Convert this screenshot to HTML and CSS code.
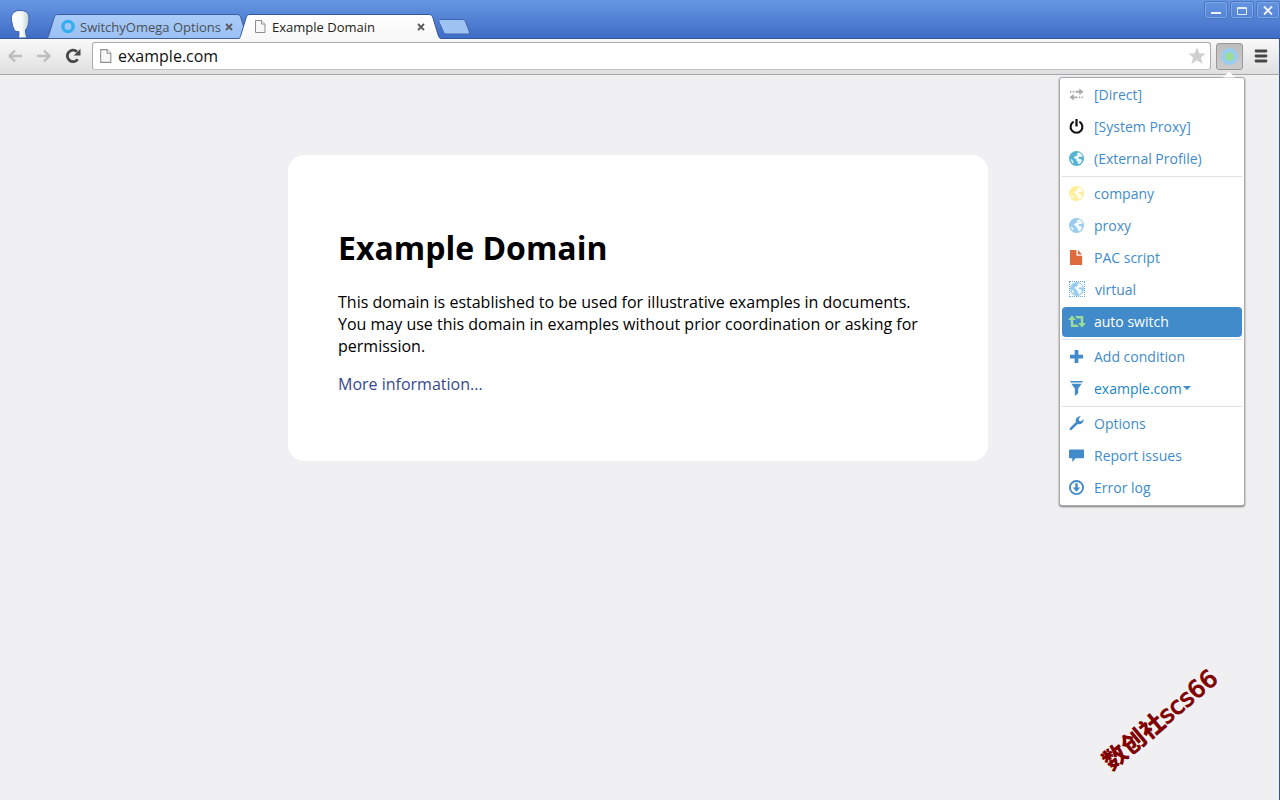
FILE: index.html
```html
<!DOCTYPE html>
<html lang="en">
<head>
    <meta charset="UTF-8">
    <meta name="viewport" content="width=device-width, initial-scale=1.0">
    <title>Example Domain</title>
    <link rel="stylesheet" href="styles.css">
</head>
<body>

<!-- Shared shapes -->
<svg class="defs" width="0" height="0" aria-hidden="true">
    <defs>
        <linearGradient id="activeFill" x1="0" y1="0" x2="0" y2="1">
            <stop offset="0" stop-color="#ffffff"/>
            <stop offset="1" stop-color="#f8f8f8"/>
        </linearGradient>
        <linearGradient id="idleFill" x1="0" y1="0" x2="0" y2="1">
            <stop offset="0" stop-color="#a9cbf8"/>
            <stop offset="1" stop-color="#9bc1f3"/>
        </linearGradient>
        <linearGradient id="headFill" x1="0" y1="0" x2="1" y2="0">
            <stop offset="0" stop-color="#ffffff"/>
            <stop offset="0.6" stop-color="#f4f9f9"/>
            <stop offset="1" stop-color="#bccfd3"/>
        </linearGradient>
    </defs>
    <symbol id="page" viewBox="0 0 12 15">
        <path d="M1.500 1.500h6l3.500 3.500v8.500h-9.500z" fill="#f7f7f7" stroke="#8e8e8e"/>
        <path d="M7.500 1.500v3.500h3.500" fill="#fff" stroke="#8e8e8e"/>
    </symbol>
    <symbol id="cross" viewBox="0 0 8 8">
        <path d="M1 1l6 6M7 1l-6 6" stroke="#5a5a5a" stroke-width="1.800" fill="none"/>
    </symbol>
    <symbol id="globe" viewBox="0 0 16 16">
        <circle cx="8" cy="8" r="8" fill="currentColor"/>
        <path d="M8.500 2l2.500-.5 2.500 2 1 2.500-2 .5-1.200-.4-1.300.9.600 1.200 2 .3 1.200 1.500-1 2.500-2 1.500-1.300-.7-.2-1.900-1.500-1.200-.1-1.600-1.500-.5L5 6.800l1.500-1.300 1.700-.5.8-1.200z" fill="#fff" opacity=".9"/>
        <path d="M1.500 8.500l2.200 1 1 2 .1 2-1.800-1.500z" fill="#fff" opacity=".8"/>
    </symbol>
</svg>

<!-- Title Bar -->
<header class="titlebar">
    <svg class="profile" viewBox="0 0 24 29">
        <path d="M12 1.500c5 0 9 1.500 9 7.500 0 5-.8 9-3.500 12 0 3 .5 5 1.500 8H10.500c.5-2.500.8-4.500.2-6.500-3 .3-4.700-.5-5-3.500L4.500 17c0-3-1.400-5-1.200-8C3.500 4 7 1.500 12 1.500z" fill="url(#headFill)" stroke="#3c61ae" stroke-width="1"/>
    </svg>
    <div class="tabs">
        <div class="tab">
            <svg class="tab-shape" viewBox="0 0 204 25" preserveAspectRatio="none">
                <path d="M0 24.500c1.500 0 2-1 3-4L8 4c1-2.500 2-3.500 4-3.500h179c2 0 3 1 4 3.500l5 16.500c1 3 2 4 4 4z" fill="url(#idleFill)" stroke="#3d5f9f"/>
            </svg>
            <svg class="favicon ring" viewBox="0 0 16 16"><circle cx="8" cy="8" r="5.500" fill="none" stroke="#34aeee" stroke-width="3.600"/></svg>
            <span class="tab-title">SwitchyOmega Options</span>
            <button class="tab-close" aria-label="Close tab"><svg viewBox="0 0 8 8"><use href="#cross"/></svg></button>
        </div>
        <div class="tab active">
            <svg class="tab-shape" viewBox="0 0 204 25" preserveAspectRatio="none">
                <path d="M0 25c1.500 0 2-1.500 3-4.500L8 4c1-2.500 2-3.500 4-3.500h179c2 0 3 1 4 3.500l5 16.500c1 3 2 4.500 4 4.500" fill="url(#activeFill)" stroke="#34569b"/>
            </svg>
            <svg class="favicon" viewBox="0 0 12 15"><use href="#page"/></svg>
            <span class="tab-title">Example Domain</span>
            <button class="tab-close" aria-label="Close tab"><svg viewBox="0 0 8 8"><use href="#cross"/></svg></button>
        </div>
        <button class="new-tab" aria-label="New tab">
            <svg viewBox="0 0 32 16"><path d="M2 .5h22c2 0 3 .8 3.700 2.500l3.500 9.500c.6 1.700 0 2.500-1.500 2.500H9c-2 0-3-.8-3.700-2.500L1 3C.5 1.500.7.5 2 .5z" fill="#9dc3f2" stroke="#3e64b0"/></svg>
        </button>
    </div>
    <div class="window-buttons">
        <button aria-label="Minimize"><svg viewBox="0 0 22 17"><rect x="6" y="10" width="10" height="2" fill="#f1f5fb"/></svg></button>
        <button aria-label="Maximize"><svg viewBox="0 0 22 17"><path d="M6.500 5.500h9v7h-9zM6 6.500h10" fill="none" stroke="#e3ecf9"/></svg></button>
        <button aria-label="Close"><svg viewBox="0 0 22 17"><path d="M7 4.500l8 8M15 4.500l-8 8" fill="none" stroke="#f1f5fb" stroke-width="1.800"/></svg></button>
    </div>
</header>

<!-- Toolbar -->
<nav class="toolbar">
    <button class="nav-button" aria-label="Back"><svg viewBox="0 0 16 16"><path d="M15 8H2.500M8 2.500L2.500 8 8 13.500" fill="none" stroke="#bdbdbd" stroke-width="2.400"/></svg></button>
    <button class="nav-button" aria-label="Forward"><svg viewBox="0 0 16 16"><path d="M1 8h12.500M8 2.500L13.500 8 8 13.500" fill="none" stroke="#bdbdbd" stroke-width="2.400"/></svg></button>
    <button class="nav-button" aria-label="Reload"><svg viewBox="0 0 16 16"><path d="M12.700 11.200A5.700 5.700 0 1 1 12 3.800" fill="none" stroke="#484848" stroke-width="2.800"/><path d="M15.500.8v6.700H8.800z" fill="#484848"/></svg></button>
    <div class="omnibox">
        <svg class="page-icon" viewBox="0 0 12 15"><use href="#page"/></svg>
        <input type="text" aria-label="Address" value="example.com">
        <svg class="star" viewBox="0 0 18 18"><path d="M9 .5l2.500 6h6.200l-4.900 4.100 1.800 6.400L9 13.300 3.400 17l1.800-6.400L.3 6.500h6.200z" fill="#cfcfcf"/></svg>
    </div>
    <div class="extension">
        <button class="extension-button" aria-label="SwitchyOmega">
            <svg viewBox="0 0 19 19"><circle cx="9.500" cy="9.500" r="8.500" fill="#99ccee"/><path d="M9.500 4.800l4.200 2.400v4.700l-4.200 2.300-4.200-2.300V7.200z" fill="#99dd99"/></svg>
        </button>

        <!-- Extension Popup -->
        <div class="popup">
            <a href="#" class="item"><svg viewBox="0 0 16 16"><path d="M1 4h1.500v2H1zM4 4h1.500v2H4zM7 4h4V1.500L15.500 5 11 8.500V6H7zM15 10h-1.500v2H15zM12 10h-1.500v2H12zM9 10H5V7.500L.5 11 5 14.500V12h4z" fill="#aaa"/></svg>[Direct]</a>
            <a href="#" class="item"><svg class="system" viewBox="0 0 16 16"><path d="M5 2.800a6.300 6.300 0 1 0 6 0" fill="none" stroke="currentColor" stroke-width="2.200"/><path d="M8 0v8" stroke="currentColor" stroke-width="2.400"/></svg>[System Proxy]</a>
            <a href="#" class="item"><svg class="external" viewBox="0 0 16 16"><use href="#globe"/></svg>(External Profile)</a>
            <hr>
            <a href="#" class="item"><svg class="company" viewBox="0 0 16 16"><use href="#globe"/></svg>company</a>
            <a href="#" class="item"><svg class="proxy" viewBox="0 0 16 16"><use href="#globe"/></svg>proxy</a>
            <a href="#" class="item"><svg viewBox="0 0 16 16"><path d="M1 0h7v6h6v10H1zM9.500 0L14 4.700H9.500z" fill="#dd6b3d"/></svg>PAC script</a>
            <a href="#" class="item"><svg class="proxy virtual" viewBox="0 0 16 16"><use href="#globe"/></svg>virtual</a>
            <a href="#" class="item selected"><svg class="switch" viewBox="0 0 18 14"><path d="M4 1l4 4.500H5.200V10H9l2 2.500H2.800v-7H0zM14 13l-4-4.500h2.800V4H9L7 1.500h8.200v7H18z" fill="#99dd99"/></svg>auto switch</a>
            <hr>
            <a href="#" class="item"><svg viewBox="0 0 16 16"><path d="M6 1h4v5h5v4h-5v5H6v-5H1V6h5z" fill="currentColor"/></svg>Add condition</a>
            <a href="#" class="item domain"><svg viewBox="0 0 16 16"><path d="M1.500 0h13v1.500h-13zM2.500 3h11L9.800 8v5L6.200 16V8z" fill="#428bca"/></svg>example.com<span class="caret"></span></a>
            <hr>
            <a href="#" class="item"><svg viewBox="0 0 16 16"><path d="M15.500 3.300a4.600 4.600 0 0 1-6.200 5.100L3 14.700c-1.300 1.200-3.200-.6-2-2l6.400-6.200A4.600 4.600 0 0 1 12.600.4L10.200 2.800l.6 2.400 2.400.5z" fill="currentColor"/></svg>Options</a>
            <a href="#" class="item"><svg viewBox="0 0 16 16"><path d="M1 1.500h14q1 0 1 1V10q0 1-1 1H7l-3.500 4V11H1q-1 0-1-1V2.500q0-1 1-1z" fill="currentColor"/></svg>Report issues</a>
            <a href="#" class="item"><svg viewBox="0 0 16 16"><circle cx="8" cy="8" r="7" fill="none" stroke="currentColor" stroke-width="2"/><path d="M6.700 3.500h2.600V8H12l-4 4.500L4 8h2.700z" fill="currentColor"/></svg>Error log</a>
        </div>
    </div>
    <button class="menu-button" aria-label="Menu"><svg viewBox="0 0 14 14"><path d="M2 2h10M2 7h10M2 12h10" stroke="#484848" stroke-width="2.800" stroke-linecap="round"/></svg></button>
</nav>

<!-- Page Content -->
<main class="content">
    <article class="card">
        <h1>Example Domain</h1>
        <p>This domain is established to be used for illustrative examples in documents. You may use this domain in examples without prior coordination or asking for permission.</p>
        <p><a href="#">More information...</a></p>
    </article>
    <div class="watermark">数创社<span>scs66</span></div>
</main>

</body>
</html>
```

FILE: styles.css
```css
/* Global Styles */
* {
    box-sizing: border-box;
}

body {
    display: flex;
    flex-direction: column;
    min-height: 100vh;
    margin: 0;
    font-family: "Open Sans", "Noto Sans", sans-serif;
    background: #f0f0f2;
}

button {
    display: flex;
    align-items: center;
    justify-content: center;
    flex: none;
    padding: 0;
    border: none;
    background: none;
    cursor: pointer;
}

svg {
    display: block;
    flex: none;
}

.defs {
    position: absolute;
}

/* Title Bar */
.titlebar {
    display: flex;
    align-items: flex-end;
    height: 39px;
    background: linear-gradient(#6697e2, #3f6cc6);
    border-bottom: 1px solid #34569b;
}

.profile {
    width: 24px;
    height: 29px;
    margin-left: 8px;
}

.tabs {
    display: flex;
    align-items: flex-end;
    flex: 1;
    margin-left: 14px;
}

.tab {
    position: relative;
    display: flex;
    align-items: center;
    width: 204px;
    height: 25px;
    margin-right: -12px;
    margin-bottom: -1px;
    padding: 0 17px 0 14px;
    font-size: 13px;
    color: #4a4f58;
}

.tab.active {
    z-index: 1;
    color: #222;
}

.tab-shape {
    position: absolute;
    inset: 0;
    width: 100%;
    height: 100%;
}

.favicon {
    position: relative;
    width: 16px;
    height: 15px;
    margin-right: 4px;
}

.tab-title {
    position: relative;
    flex: 1;
    white-space: nowrap;
}

.tab-close {
    position: relative;
    width: 8px;
    height: 8px;
}

.tab-close svg {
    width: 8px;
    height: 8px;
}

.new-tab {
    margin: 0 0 3px 8px;
}

.new-tab svg {
    width: 32px;
    height: 16px;
}

.window-buttons {
    display: flex;
    align-self: flex-start;
    gap: 4px;
    margin: 2px 1px 0 0;
}

.window-buttons button {
    width: 22px;
    height: 16px;
    border: 1px solid #7fa5e3;
    border-radius: 2px;
    box-shadow: 0 0 0 1px #4a76c6;
}

.window-buttons svg {
    width: 22px;
    height: 17px;
}

/* Toolbar */
.toolbar {
    display: flex;
    align-items: center;
    height: 36px;
    padding: 0 11px 1px 7px;
    background: linear-gradient(#f9f9f9, #dfdfdf);
    border-right: 1px solid #34569b;
    border-bottom: 1px solid #a8a8a8;
}

.nav-button {
    width: 16px;
    height: 16px;
    margin-right: 13px;
}

.nav-button svg {
    width: 16px;
    height: 16px;
}

.omnibox {
    display: flex;
    align-items: center;
    flex: 1;
    height: 28px;
    margin-right: 5px;
    margin-left: -2px;
    padding: 0 4px 0 6px;
    background: #fff;
    border: 1px solid #a9a9a9;
    border-bottom-color: #c4c4c4;
    border-radius: 3px;
}

.page-icon {
    width: 13px;
    height: 16px;
}

.omnibox input {
    flex: 1;
    min-width: 0;
    margin-left: 6px;
    padding: 0;
    border: none;
    outline: none;
    background: none;
    font-family: inherit;
    font-size: 16px;
    color: #111;
}

.star {
    width: 18px;
    height: 18px;
}

.extension {
    position: relative;
}

.extension-button {
    width: 27px;
    height: 27px;
    border: 1px solid #989898;
    border-radius: 3px;
    background: linear-gradient(#bdbdbd, #cbcbcb);
}

.extension-button svg {
    width: 19px;
    height: 19px;
}

.menu-button {
    margin-left: 11px;
}

.menu-button svg {
    width: 14px;
    height: 14px;
}

/* Extension Popup */
.popup {
    position: absolute;
    top: 34px;
    right: -2px;
    z-index: 2;
    display: flex;
    flex-direction: column;
    gap: 2px;
    width: 186px;
    padding: 2px;
    background: #fff;
    border: 1px solid #aaa;
    border-radius: 3px;
    box-shadow: 0 1px 2px rgba(0, 0, 0, 0.5);
}

/* Arrow pointing at the extension button */
.popup::before {
    content: "";
    position: absolute;
    top: -6px;
    right: 9px;
    width: 12px;
    height: 6px;
    background: #fff;
    clip-path: polygon(50% 0, 100% 100%, 0 100%);
}

.popup hr {
    width: 100%;
    height: 1px;
    margin: 0;
    border: none;
    background: #e0e0e0;
}

.item {
    display: flex;
    align-items: center;
    height: 30px;
    padding: 0 8px 1px 7px;
    border-radius: 4px;
    font-size: 14px;
    color: #428bca;
    text-decoration: none;
    white-space: nowrap;
}

.item svg {
    width: 15px;
    height: 15px;
    margin-right: 10px;
}

.item.selected {
    background: #428bca;
    color: #fff;
}

.item.domain {
    color: #1a86c6;
}

.item .system {
    color: #111;
}

.item .external {
    color: #55b4d0;
}

.item .company {
    color: #ffee99;
}

.item .proxy {
    color: #99ccee;
}

.item .virtual {
    width: 16px;
    height: 16px;
    border: 1px dotted #68aad8;
}

.item .switch {
    width: 18px;
    margin: 0 8px 0 -1px;
}

.caret {
    margin-left: 1px;
    border: 4px solid transparent;
    border-top-color: #428bca;
    border-bottom: none;
}

/* Page Content */
.content {
    position: relative;
    flex: 1;
    padding: 80px 3px 80px 0;
    border-right: 1px solid #34569b;
    overflow: hidden;
}

.card {
    max-width: 700px;
    margin: 0 auto;
    padding: 50px;
    background: #fff;
    border-radius: 16px;
}

.card h1 {
    margin: 21px 0;
    font-size: 32px;
    line-height: 44px;
}

.card p {
    margin: 16px 0;
    font-size: 16px;
    line-height: 22px;
}

.card a {
    color: #38488f;
    text-decoration: none;
}

/* Watermark */
.watermark {
    position: absolute;
    right: 48px;
    bottom: 64px;
    font-family: "DejaVu Sans", "Noto Sans CJK SC", sans-serif;
    font-size: 24px;
    font-weight: 900;
    line-height: 32px;
    color: #800000;
    white-space: nowrap;
    transform: rotate(-40deg);
}

.watermark span {
    font-weight: normal;
    -webkit-text-stroke: 1px #800000;
}
```
